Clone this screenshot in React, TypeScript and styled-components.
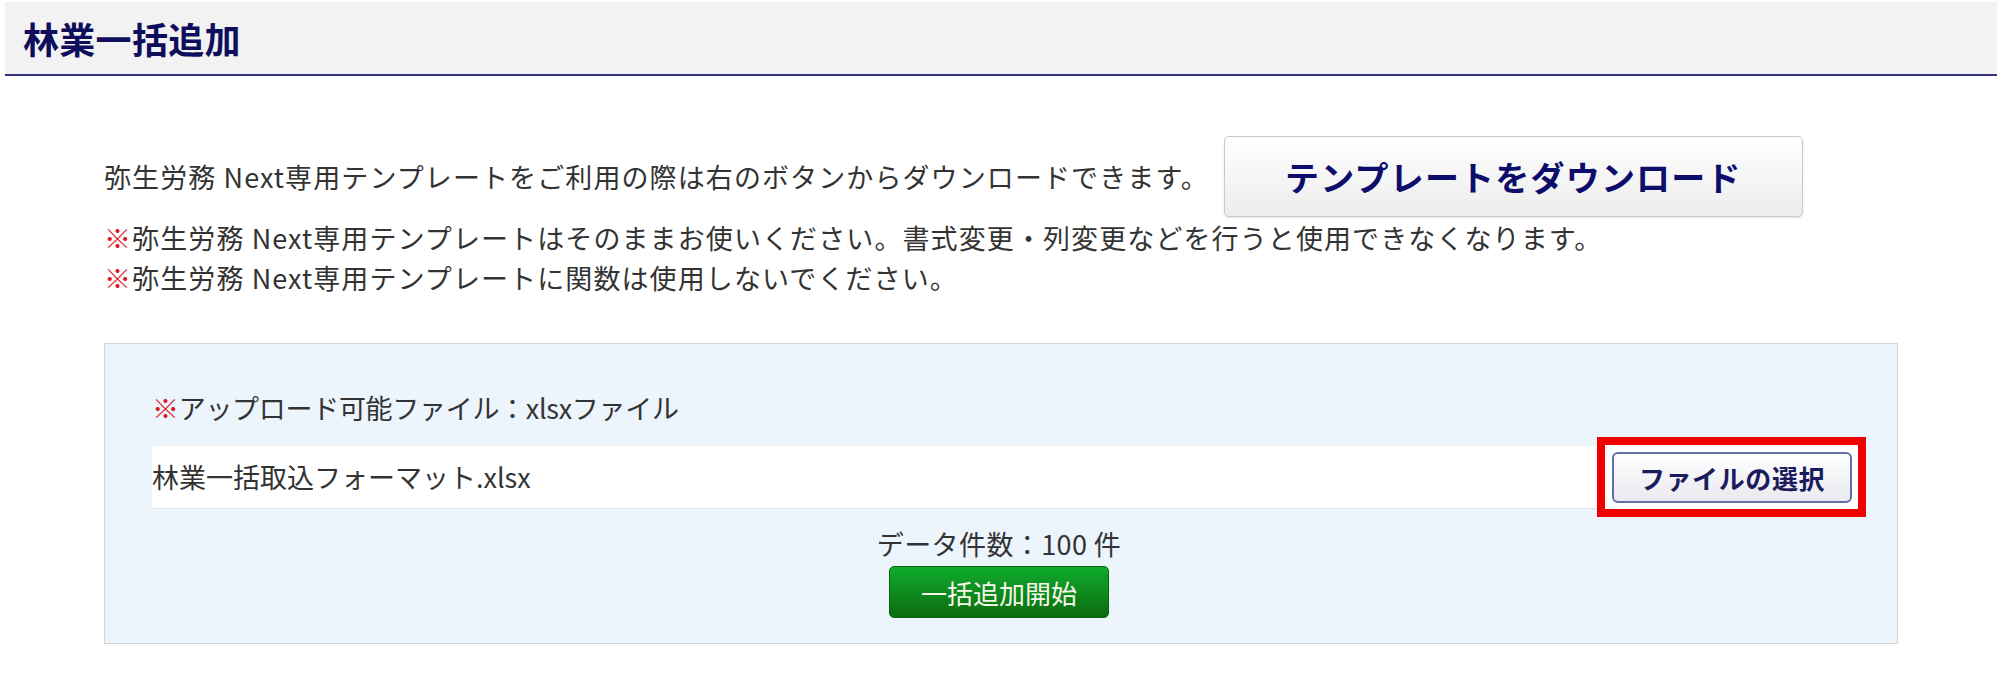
import styled, { createGlobalStyle } from "styled-components";

const GlobalStyle = createGlobalStyle`
    body {
        margin: 0;
        background: #fff;
        font-family: "Noto Sans CJK JP", "Noto Sans", sans-serif;
        color: #333;
    }
`;

const Page = styled.div`
    padding: 2px 3px 0 5px;
`;

const Header = styled.header`
    height: 72px;
    display: flex;
    align-items: center;
    padding-left: 18px;
    background: #f2f2f2;
    border-bottom: 2px solid #33337f;
`;

const Title = styled.h1`
    margin: 0;
    font-size: 36px;
    font-weight: 700;
    color: #0e0e5c;
    letter-spacing: 0.3px;
`;

const Content = styled.main`
    padding: 60px 99px 0;
`;

const IntroRow = styled.div`
    display: flex;
    align-items: center;
    gap: 15px;
`;

const Text = styled.p<{ $spacing?: number }>`
    margin: 0;
    font-size: 27px;
    line-height: 40px;
    color: #333;
    letter-spacing: ${(p) => p.$spacing ?? 1.1}px;
`;

const Mark = styled.span`
    color: #e0141e;
`;

const DownloadButton = styled.button`
    width: 579px;
    height: 81px;
    border: 1px solid #c9c9c9;
    border-radius: 5px;
    background: linear-gradient(#ffffff, #ececec);
    box-shadow: 0 1px 2px rgba(0, 0, 0, 0.12);
    font-family: inherit;
    font-size: 34px;
    font-weight: 700;
    letter-spacing: 1.2px;
    color: #0d0d6b;
    cursor: pointer;
`;

const Notes = styled.div`
    margin-top: 1px;
`;

const Panel = styled.section`
    margin-top: 45px;
    padding: 44px 39px 25px 47px;
    background: #ecf4fc;
    border: 1px solid #d2d4d8;
`;

const FileRow = styled.div`
    display: flex;
    align-items: center;
    margin-top: 17px;
`;

const FileName = styled.div`
    flex: 1;
    height: 62px;
    margin-right: 8px;
    display: flex;
    align-items: center;
    background: #fff;
    border-bottom: 1px dotted #cfcfcf;
    font-size: 27px;
    letter-spacing: 0;
    color: #333;
`;

const Highlight = styled.div`
    padding: 7px 6px 6px 7px;
    background: #fff;
    outline: 8px solid #f00000;
`;

const SelectButton = styled.button`
    display: block;
    width: 240px;
    height: 51px;
    border: 2px solid #6070aa;
    border-radius: 6px;
    background: linear-gradient(#ffffff, #e9e9ef);
    font-family: inherit;
    font-size: 26px;
    font-weight: 700;
    letter-spacing: 0.6px;
    color: #1b1b5e;
    cursor: pointer;
`;

const Summary = styled.div`
    margin-top: 15px;
    margin-left: -12px;
    display: flex;
    flex-direction: column;
    align-items: center;
    gap: 2px;
`;

const StartButton = styled.button`
    width: 220px;
    height: 52px;
    border: 1px solid #0b620d;
    border-radius: 5px;
    background: linear-gradient(#10ab2e, #0c6c0f);
    font-family: inherit;
    font-size: 26px;
    color: #f6f6e8;
    cursor: pointer;
`;

const App = (): JSX.Element => {
    return (
        <Page>
            <GlobalStyle />
            <Header>
                <Title>林業一括追加</Title>
            </Header>

            <Content>
                <IntroRow>
                    <Text>弥生労務 Next専用テンプレートをご利用の際は右のボタンからダウンロードできます。</Text>
                    <DownloadButton>テンプレートをダウンロード</DownloadButton>
                </IntroRow>
                <Notes>
                    <Text><Mark>※</Mark>弥生労務 Next専用テンプレートはそのままお使いください。書式変更・列変更などを行うと使用できなくなります。</Text>
                    <Text><Mark>※</Mark>弥生労務 Next専用テンプレートに関数は使用しないでください。</Text>
                </Notes>

                <Panel>
                    <Text $spacing={-0.3}><Mark>※</Mark>アップロード可能ファイル：xlsxファイル</Text>
                    <FileRow>
                        <FileName>林業一括取込フォーマット.xlsx</FileName>
                        <Highlight>
                            <SelectButton>ファイルの選択</SelectButton>
                        </Highlight>
                    </FileRow>
                    <Summary>
                        <Text $spacing={0.4}>データ件数：100 件</Text>
                        <StartButton>一括追加開始</StartButton>
                    </Summary>
                </Panel>
            </Content>
        </Page>
    );
};

export default App;
